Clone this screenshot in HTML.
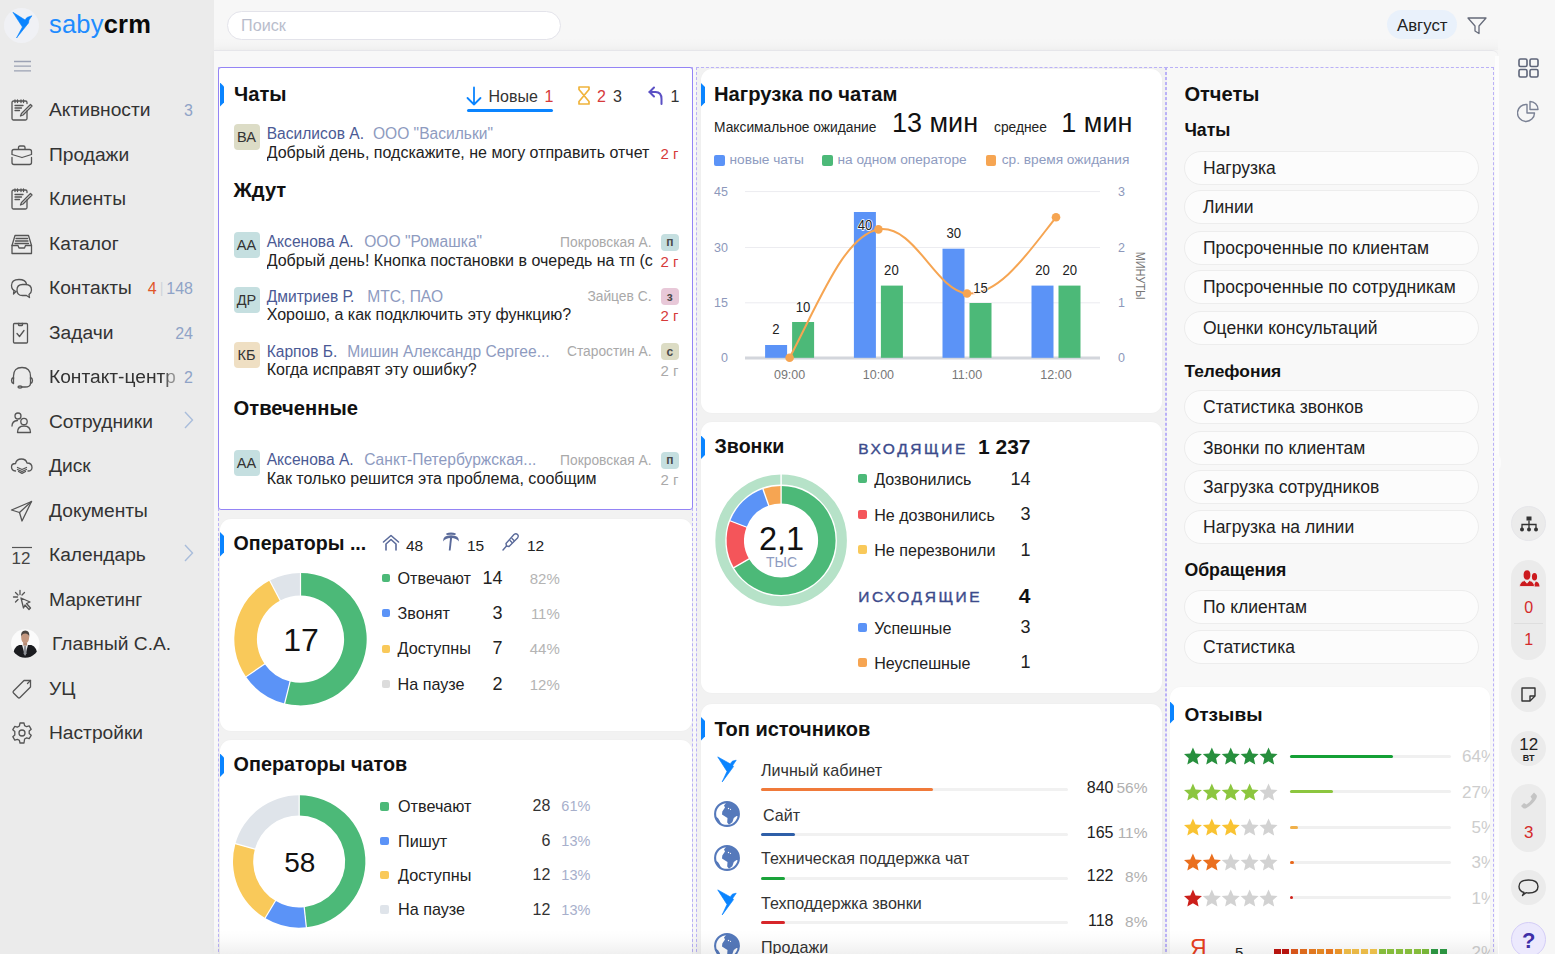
<!DOCTYPE html>
<html><head><meta charset="utf-8">
<style>
*{box-sizing:border-box;margin:0;padding:0}
html,body{width:1555px;height:954px;overflow:hidden}
body{font-family:"Liberation Sans",sans-serif;background:#f7f7f7;position:relative;color:#222}
.a{position:absolute;white-space:nowrap}
#side{position:absolute;left:0;top:0;width:214px;height:954px;background:#ebebeb}
.nav{position:absolute;left:0;width:214px;height:44px}
.nav .t{position:absolute;left:49px;top:12px;font-size:19.2px;color:#333;line-height:21px}
.nav svg{position:absolute;left:10px;top:11px}
.nav .c{position:absolute;right:21px;top:14px;font-size:16px;color:#8fa3c7;line-height:20px}
#panel{position:absolute;left:214px;top:50px;width:1284px;height:904px;background:#f8f8f8;border-top:1px solid #e6e6ea;border-top-right-radius:6px;box-shadow:2px 2px 8px rgba(0,0,0,.05)}
#rbar{position:absolute;left:1498px;top:50px;width:57px;height:904px;background:#f6f6f6}
.dash{position:absolute;border:1px dashed #bab1f7}
#tshade{position:absolute;left:214px;top:38px;width:1284px;height:12px;background:linear-gradient(rgba(0,0,0,0),rgba(0,0,0,.018))}
.card{position:absolute;background:#fff;border-radius:11px;box-shadow:0 0 2px rgba(0,0,0,.03)}
.mark{position:absolute;width:4px;height:24px;background:#0a84ff;clip-path:polygon(0 0,100% 4px,100% calc(100% - 4px),0 100%)}
.ttl{position:absolute;font-size:20.2px;font-weight:bold;color:#111;line-height:24px;white-space:nowrap}
.pill{position:absolute;left:1184px;width:295px;height:34px;border-radius:17px;background:#fcfcfc;border:1px solid #ededed;font-size:17.5px;color:#222;line-height:32px;padding-left:18px;white-space:nowrap}
.sub{position:absolute;left:1184px;font-size:17.5px;font-weight:bold;color:#111;line-height:20px}
.rb{position:absolute;left:1511px;width:35px;border-radius:18px;background:#ebebeb}
</style></head><body>
<div id="side">
<div class="a" style="left:4px;top:8px;width:35px;height:35px;border-radius:50%;background:#f0f1f5"></div>
<svg class="a" style="left:0;top:0" width="40" height="42" viewBox="0 0 40 42"><path d="M12.9 12.3 L25.2 20 Q26 18 27.5 17.3 L31.9 15.8 L29 20 L28.5 23 L16.5 38 L22.4 27 Z" fill="#0a84ff" stroke="#0a84ff" stroke-width="0.6" stroke-linejoin="round"/></svg>
<div class="a" style="left:49px;top:9px;font-size:25.5px;line-height:30px;letter-spacing:0.2px"><span style="color:#1e8cff">saby</span><span style="color:#0a0a0a;font-weight:bold">crm</span></div>
<svg class="a" style="left:14px;top:60px" width="17" height="12" viewBox="0 0 17 12"><path d="M0 1.5H17M0 6.2H17M0 10.8H17" stroke="#9ca2b4" stroke-width="1.3"/></svg>

<div class="nav" style="top:87px"><svg width="24" height="24" viewBox="0 0 24 24" fill="none" stroke="#555" stroke-width="1.3" stroke-linecap="round" stroke-linejoin="round"><path d="M17 13v7.5a1.5 1.5 0 0 1-1.5 1.5h-12A1.5 1.5 0 0 1 2 20.5V4.5A1.5 1.5 0 0 1 3.5 3h12A1.5 1.5 0 0 1 17 4.5v1"/><path d="M5 2v2.5M7.5 2v2.5M11 2v2.5M13.5 2v2.5M5 7.5h8M5 10h6.5M5 12.5h4.5"/><path d="M20.5 6.5l1.5 1.5-9 9-2.5 1 1-2.5z"/></svg><span class="t">Активности</span><span class="c">3</span></div>
<div class="nav" style="top:131.5px"><svg width="24" height="24" viewBox="0 0 24 24" fill="none" stroke="#555" stroke-width="1.3" stroke-linecap="round" stroke-linejoin="round"><path d="M8.5 6V4.5Q8.5 3 10 3h3.5Q15 3 15 4.5V6"/><path d="M2 8.5Q2 6.5 4 6.5h15.5Q21.5 6.5 21.5 8.5v3L12 14.5 2 11.5z"/><path d="M2 14.5v5q0 2 2 2h15.5q2 0 2-2v-5"/></svg><span class="t">Продажи</span></div>
<div class="nav" style="top:176px"><svg width="24" height="24" viewBox="0 0 24 24" fill="none" stroke="#555" stroke-width="1.3" stroke-linecap="round" stroke-linejoin="round"><path d="M17 13v7.5a1.5 1.5 0 0 1-1.5 1.5h-12A1.5 1.5 0 0 1 2 20.5V4.5A1.5 1.5 0 0 1 3.5 3h12A1.5 1.5 0 0 1 17 4.5v1"/><path d="M5 2v2.5M7.5 2v2.5M11 2v2.5M13.5 2v2.5M5 7.5h8M5 10h6.5M5 12.5h4.5"/><path d="M20.5 6.5l1.5 1.5-9 9-2.5 1 1-2.5z"/></svg><span class="t">Клиенты</span></div>
<div class="nav" style="top:220.5px"><svg width="24" height="24" viewBox="0 0 24 24" fill="none" stroke="#555" stroke-width="1.3" stroke-linecap="round" stroke-linejoin="round"><path d="M2 13.5l3-10h13.5l3 10"/><path d="M2 13.5v8h19.5v-8h-6l-1 2.5h-5.5l-1-2.5z"/><path d="M6 6.5h11.5M5.5 9h12.5M5 11.5h13.5"/></svg><span class="t">Каталог</span></div>
<div class="nav" style="top:265px"><svg width="24" height="24" viewBox="0 0 24 24" fill="none" stroke="#555" stroke-width="1.3" stroke-linecap="round" stroke-linejoin="round"><path d="M6 15.5Q1.5 14 1.5 9.5 1.5 3.5 9 3.5q6.5 0 7.5 4.5"/><path d="M6 15.5l-2.5 2.5 .5-3.5"/><path d="M12.5 8.5h3q6 0 6 5.5 0 3-2.5 4.5l.5 3-3-2h-4q-5.5 0-5.5-5.5 0-5.5 5.5-5.5z"/></svg><span class="t">Контакты</span><span class="c" style="right:21px"><span style="color:#e0552a">4</span><span style="color:#cfd3da;margin:0 3px;font-size:14px;position:relative;top:-1px">|</span>148</span></div>
<div class="nav" style="top:309.5px"><svg width="24" height="24" viewBox="0 0 24 24" fill="none" stroke="#555" stroke-width="1.3" stroke-linecap="round" stroke-linejoin="round"><path d="M9 2.5h-4.5Q3.5 2.5 3.5 3.5v17.5q0 1 1 1h12q1 0 1-1V3.5q0-1-1-1H12"/><path d="M8.5 2.5h4v1.5q0 .5-.5.5h-3q-.5 0-.5-.5z"/><path d="M7 12.5l2.5 3 4.5-6"/></svg><span class="t">Задачи</span><span class="c">24</span></div>
<div class="nav" style="top:354px"><svg width="24" height="24" viewBox="0 0 24 24" fill="none" stroke="#555" stroke-width="1.3" stroke-linecap="round" stroke-linejoin="round"><path d="M3.5 14V11Q3.5 2.5 12 2.5T20.5 11v3"/><path d="M3.5 12.5q-2 .5-2 3t2 3z M20.5 12.5q2 .5 2 3t-2 3z"/><path d="M20.5 18.5q0 3.5-5.5 3.5h-3.5"/><ellipse cx="10" cy="22" rx="2" ry="1"/></svg><span class="t" style="width:129px;overflow:hidden;-webkit-mask-image:linear-gradient(90deg,#000 88%,rgba(0,0,0,.25))">Контакт-центр</span><span class="c">2</span></div>
<div class="nav" style="top:398.5px"><svg width="24" height="24" viewBox="0 0 24 24" fill="none" stroke="#555" stroke-width="1.3" stroke-linecap="round" stroke-linejoin="round"><circle cx="8" cy="6" r="3"/><path d="M2 16q0-5 5.5-5.5"/><circle cx="14" cy="11.5" r="3.2"/><path d="M7.5 22.5q0-6.5 6.5-6.5t6.5 6.5z"/></svg><span class="t">Сотрудники</span><svg style="left:184px;top:12px" width="10" height="18" viewBox="0 0 10 18" fill="none" stroke="#a9bddb" stroke-width="1.4"><path d="M1 1l7.5 8L1 17"/></svg></div>
<div class="nav" style="top:443px"><svg width="24" height="24" viewBox="0 0 24 24" fill="none" stroke="#555" stroke-width="1.3" stroke-linecap="round" stroke-linejoin="round"><path d="M5.5 17Q1.5 16.5 1.5 13 1.5 9.5 5.5 9.5 6.5 5 11.5 5q4.5 0 5.5 4 5 0 5 4.5 0 3.5-4 3.5"/><path d="M7.5 13.5l4.5 2 4.5-2M7.5 15.5l4.5 2 4.5-2M8.5 17.5l3.5 1.8 3.5-1.8"/></svg><span class="t">Диск</span></div>
<div class="nav" style="top:487.5px"><svg width="24" height="24" viewBox="0 0 24 24" fill="none" stroke="#555" stroke-width="1.3" stroke-linecap="round" stroke-linejoin="round"><path d="M21.5 2.5L1.5 11l8 2.5 2.5 8.5z"/><path d="M9.5 13.5L21.5 2.5"/></svg><span class="t">Документы</span></div>
<div class="nav" style="top:532px"><svg width="24" height="24" viewBox="0 0 24 24"><path d="M2 4.5h20" stroke="#555" stroke-width="1.2"/><text x="1.5" y="21" font-family="Liberation Sans" font-size="17" fill="#444">12</text></svg><span class="t">Календарь</span><svg style="left:184px;top:12px" width="10" height="18" viewBox="0 0 10 18" fill="none" stroke="#a9bddb" stroke-width="1.4"><path d="M1 1l7.5 8L1 17"/></svg></div>
<div class="nav" style="top:576.5px"><svg width="24" height="24" viewBox="0 0 24 24" fill="none" stroke="#555" stroke-width="1.3" stroke-linecap="round" stroke-linejoin="round"><path d="M10 2.5v4M3.5 9h4M5.5 4.5l2.5 2.5M14.5 4.5L12 7M5.5 14l2.5-2.5"/><path d="M11 10l9 4-3.5 1.5 4 4.5-1.5 1.5-4-4.5L13.5 20z"/></svg><span class="t">Маркетинг</span></div>
<div class="nav" style="top:621px"><svg class="a" style="left:11px;top:7.5px" width="28.5" height="29" viewBox="0 0 28 28"><defs><clipPath id="cav"><circle cx="14" cy="14" r="14"/></clipPath></defs><circle cx="14" cy="14" r="14" fill="#fbfbfb"/><g clip-path="url(#cav)"><path d="M1.5 30 Q1.5 17.5 8 15.5 L20 15.5 Q26.5 17.5 26.5 30 Z" fill="#1b1c20"/><path d="M10.8 15.3 L13.8 26 L16.8 15.3 Z" fill="#e6e6e6"/><path d="M13 16 L14.6 16 L15.3 23.5 L13.8 26 L12.4 23.5 Z" fill="#8d9096"/><rect x="12" y="11.5" width="3.8" height="4.5" fill="#b48a74"/><ellipse cx="13.9" cy="8.2" rx="3.9" ry="5.6" fill="#c49880"/><path d="M9.8 7.5 Q9.5 1.2 14 1.2 Q18.5 1.2 18 7.5 Q17.3 4.3 14 4.2 Q10.6 4.3 9.8 7.5Z" fill="#4b4540"/></g></svg><span class="t" style="left:52px">Главный С.А.</span></div>
<div class="nav" style="top:665.5px"><svg width="24" height="24" viewBox="0 0 24 24" fill="none" stroke="#555" stroke-width="1.3" stroke-linecap="round" stroke-linejoin="round"><path d="M14 3.5h6.5V10L10 20.5q-1 1-2 0L3.5 16q-1-1 0-2z"/><path d="M17.5 6.5l3-3"/></svg><span class="t">УЦ</span></div>
<div class="nav" style="top:710px"><svg width="24" height="24" viewBox="0 0 24 24" fill="none" stroke="#555" stroke-width="1.3" stroke-linecap="round" stroke-linejoin="round"><circle cx="12" cy="12" r="3"/><path d="M10 2h4l.6 2.6 2 1.1 2.6-.8 2 3.4-2 1.8v2.4l2 1.8-2 3.4-2.6-.8-2 1.1L14 22h-4l-.6-2.6-2-1.1-2.6.8-2-3.4 2-1.8V10.5l-2-1.8 2-3.4 2.6.8 2-1.1z"/></svg><span class="t">Настройки</span></div>
</div>
<div id="tshade"></div><div id="panel"></div><div id="rbar"></div>
<div class="a" style="left:227px;top:11px;width:334px;height:29px;border-radius:15px;background:#fff;border:1px solid #e3e3ea"></div>
<div class="a" style="left:241px;top:16px;font-size:16.2px;color:#b9bdcc;line-height:19px">Поиск</div>
<div class="a" style="left:1387px;top:10px;width:70px;height:29px;border-radius:15px;background:#e9f1fb"></div>
<div class="a" style="left:1397px;top:16px;font-size:16.8px;color:#222;line-height:19px">Август</div>
<svg class="a" style="left:1467px;top:17px" width="20" height="18" viewBox="0 0 20 18" fill="none" stroke="#666b7a" stroke-width="1.3" stroke-linejoin="round"><path d="M1 1h18l-7 8v7.5l-4-2.5V9z"/></svg>

<div class="a" style="left:1495px;top:56px;width:3.5px;height:898px;background:#fdfdfd"></div><div class="a" style="left:1493px;top:453px;width:8px;height:19px;border-radius:0 10px 10px 0;background:#fbfbfb"></div>
<div class="dash" style="left:218px;top:67px;width:475px;height:900px;background:#f2f2f2"></div>
<div class="dash" style="left:696px;top:67px;width:471px;height:900px;background:#f2f2f2"></div>
<div class="dash" style="left:1165px;top:67px;width:329px;height:900px"></div>
<div class="a" style="left:218px;top:67px;width:475px;height:443px;background:#fff;border:1.8px solid #9484f5;border-radius:3px"></div>
<div class="mark" style="left:220px;top:82.5px;height:24px"></div>
<div class="a" style="left:234.00px;top:84.03px;font-size:20.2px;line-height:20.2px;color:#111;font-weight:bold;">Чаты</div>
<svg class="a" style="left:466px;top:86px" width="16" height="20" viewBox="0 0 16 20" fill="none" stroke="#0a84ff" stroke-width="1.8" stroke-linecap="round" stroke-linejoin="round"><path d="M8 1.5v17M1.5 12l6.5 6.5 6.5-6.5"/></svg>
<div class="a" style="left:488.50px;top:89.40px;font-size:16px;line-height:16px;color:#333;">Новые</div>
<div class="a" style="left:544.50px;top:89.40px;font-size:16px;line-height:16px;color:#d63a3a;">1</div>
<div class="a" style="left:466.5px;top:108.5px;width:86px;height:3px;background:#0a84ff;border-radius:2px"></div>
<svg class="a" style="left:578px;top:86px" width="12" height="19" viewBox="0 0 12 19" fill="none" stroke="#f0b43c" stroke-width="1.7" stroke-linejoin="round"><path d="M1 1h10v2.5L6 9.5 1 3.5zM1 18h10v-2.5L6 9.5 1 15.5z"/></svg>
<div class="a" style="left:597.00px;top:89.40px;font-size:16px;line-height:16px;color:#d63a3a;">2</div>
<div class="a" style="left:613.00px;top:89.40px;font-size:16px;line-height:16px;color:#333;">3</div>
<svg class="a" style="left:648px;top:86px" width="16" height="19" viewBox="0 0 16 19" fill="none" stroke="#5b50c4" stroke-width="2" stroke-linecap="round" stroke-linejoin="round"><path d="M6 1.5L1.5 6 6 10.5"/><path d="M1.5 6h6q6 0 6 7v5"/></svg>
<div class="a" style="left:670.50px;top:89.40px;font-size:16px;line-height:16px;color:#333;">1</div>
<div class="a" style="left:233.5px;top:124px;width:26px;height:26px;background:#dcdcc6;border-radius:4px"></div>
<div class="a" style="left:246.50px;top:130.18px;font-size:14.5px;line-height:14.5px;color:#333;transform:translateX(-50%);">ВА</div>
<div class="a" style="left:266.70px;top:126.04px;font-size:15.6px;line-height:15.6px;color:#4b5a95;">Василисов А.</div>
<div class="a" style="left:372.90px;top:126.04px;font-size:15.6px;line-height:15.6px;color:#8e9bbf;">ООО "Васильки"</div>
<div class="a" style="left:266.7px;top:144.70px;width:387px;overflow:hidden;font-size:16px;line-height:16px;color:#222">Добрый день, подскажите, не могу отправить отчет по НДС</div>
<div class="a" style="left:678.60px;top:145.55px;font-size:15px;line-height:15px;color:#d63a3a;transform:translateX(-100%);">2 г</div>
<div class="a" style="left:233.60px;top:180.33px;font-size:20.2px;line-height:20.2px;color:#111;font-weight:bold;">Ждут</div>
<div class="a" style="left:233.5px;top:232px;width:26px;height:26px;background:#c5dfe0;border-radius:4px"></div>
<div class="a" style="left:246.50px;top:238.18px;font-size:14.5px;line-height:14.5px;color:#333;transform:translateX(-50%);">АА</div>
<div class="a" style="left:266.70px;top:234.04px;font-size:15.6px;line-height:15.6px;color:#4b5a95;">Аксенова А.</div>
<div class="a" style="left:364.20px;top:234.04px;font-size:15.6px;line-height:15.6px;color:#8e9bbf;">ООО "Ромашка"</div>
<div class="a" style="left:651.50px;top:235.57px;font-size:13.8px;line-height:13.8px;color:#a9a9a9;transform:translateX(-100%);">Покровская А.</div>
<div class="a" style="left:660.8px;top:233.8px;width:18px;height:16.8px;background:#c5dfe0;border-radius:4px"></div>
<div class="a" style="left:669.80px;top:236.00px;font-size:12px;line-height:12px;color:#4a4a4a;font-weight:bold;transform:translateX(-50%);">п</div>
<div class="a" style="left:266.7px;top:252.70px;width:387px;overflow:hidden;font-size:16px;line-height:16px;color:#222">Добрый день! Кнопка постановки в очередь на тп (с</div>
<div class="a" style="left:678.60px;top:253.55px;font-size:15px;line-height:15px;color:#d63a3a;transform:translateX(-100%);">2 г</div>
<div class="a" style="left:233.5px;top:286.5px;width:26px;height:26px;background:#c5dfe0;border-radius:4px"></div>
<div class="a" style="left:246.50px;top:292.68px;font-size:14.5px;line-height:14.5px;color:#333;transform:translateX(-50%);">ДР</div>
<div class="a" style="left:266.70px;top:288.54px;font-size:15.6px;line-height:15.6px;color:#4b5a95;">Дмитриев Р.</div>
<div class="a" style="left:367.20px;top:288.54px;font-size:15.6px;line-height:15.6px;color:#8e9bbf;">МТС, ПАО</div>
<div class="a" style="left:651.50px;top:290.07px;font-size:13.8px;line-height:13.8px;color:#a9a9a9;transform:translateX(-100%);">Зайцев С.</div>
<div class="a" style="left:660.8px;top:288.3px;width:18px;height:16.8px;background:#e8c8d8;border-radius:4px"></div>
<div class="a" style="left:669.80px;top:290.50px;font-size:12px;line-height:12px;color:#4a4a4a;font-weight:bold;transform:translateX(-50%);">з</div>
<div class="a" style="left:266.7px;top:307.20px;width:387px;overflow:hidden;font-size:16px;line-height:16px;color:#222">Хорошо, а как подключить эту функцию?</div>
<div class="a" style="left:678.60px;top:308.05px;font-size:15px;line-height:15px;color:#d63a3a;transform:translateX(-100%);">2 г</div>
<div class="a" style="left:233.5px;top:341.5px;width:26px;height:26px;background:#efdfc3;border-radius:4px"></div>
<div class="a" style="left:246.50px;top:347.68px;font-size:14.5px;line-height:14.5px;color:#333;transform:translateX(-50%);">КБ</div>
<div class="a" style="left:266.70px;top:343.54px;font-size:15.6px;line-height:15.6px;color:#4b5a95;">Карпов Б.</div>
<div class="a" style="left:347.20px;top:343.54px;font-size:15.6px;line-height:15.6px;color:#8e9bbf;">Мишин Александр Сергее...</div>
<div class="a" style="left:651.50px;top:345.07px;font-size:13.8px;line-height:13.8px;color:#a9a9a9;transform:translateX(-100%);">Старостин А.</div>
<div class="a" style="left:660.8px;top:343.3px;width:18px;height:16.8px;background:#dcdcc4;border-radius:4px"></div>
<div class="a" style="left:669.80px;top:345.50px;font-size:12px;line-height:12px;color:#4a4a4a;font-weight:bold;transform:translateX(-50%);">с</div>
<div class="a" style="left:266.7px;top:362.20px;width:387px;overflow:hidden;font-size:16px;line-height:16px;color:#222">Когда исправят эту ошибку?</div>
<div class="a" style="left:678.60px;top:363.05px;font-size:15px;line-height:15px;color:#aaa;transform:translateX(-100%);">2 г</div>
<div class="a" style="left:233.60px;top:397.53px;font-size:20.2px;line-height:20.2px;color:#111;font-weight:bold;">Отвеченные</div>
<div class="a" style="left:233.5px;top:450px;width:26px;height:26px;background:#c5dfe0;border-radius:4px"></div>
<div class="a" style="left:246.50px;top:456.18px;font-size:14.5px;line-height:14.5px;color:#333;transform:translateX(-50%);">АА</div>
<div class="a" style="left:266.70px;top:452.04px;font-size:15.6px;line-height:15.6px;color:#4b5a95;">Аксенова А.</div>
<div class="a" style="left:364.20px;top:452.04px;font-size:15.6px;line-height:15.6px;color:#8e9bbf;">Санкт-Петербуржская...</div>
<div class="a" style="left:651.50px;top:453.57px;font-size:13.8px;line-height:13.8px;color:#a9a9a9;transform:translateX(-100%);">Покровская А.</div>
<div class="a" style="left:660.8px;top:451.8px;width:18px;height:16.8px;background:#c5dfe0;border-radius:4px"></div>
<div class="a" style="left:669.80px;top:454.00px;font-size:12px;line-height:12px;color:#4a4a4a;font-weight:bold;transform:translateX(-50%);">п</div>
<div class="a" style="left:266.7px;top:470.70px;width:387px;overflow:hidden;font-size:16px;line-height:16px;color:#222">Как только решится эта проблема, сообщим</div>
<div class="a" style="left:678.60px;top:471.55px;font-size:15px;line-height:15px;color:#aaa;transform:translateX(-100%);">2 г</div>
<div class="card" style="left:220px;top:518.5px;width:472px;height:212px"></div>
<div class="mark" style="left:220px;top:532px;height:24.5px"></div>
<div class="a" style="left:233.60px;top:534.34px;font-size:19.6px;line-height:19.6px;color:#111;font-weight:bold;">Операторы ...</div>
<svg class="a" style="left:382px;top:534px" width="18" height="17" viewBox="0 0 18 17" fill="none" stroke="#5a6a9a" stroke-width="1.6" stroke-linecap="round" stroke-linejoin="round"><path d="M1.5 8L9 1.5 16.5 8"/><path d="M4 16V10L9 5.5 14 10v6"/></svg>
<div class="a" style="left:406.00px;top:537.83px;font-size:15.5px;line-height:15.5px;color:#222;">48</div>
<svg class="a" style="left:442px;top:532px" width="18" height="20" viewBox="0 0 18 20" fill="#5a6a9a"><path d="M1.2 9.5 Q0.5 3.2 9 3.2 Q17.5 3.2 16.8 9.5 Q14.8 6 9 6 Q3.2 6 1.2 9.5 Z"/><path d="M4.5 2.2 Q9 0.2 13.5 2.2 Q9 1.5 4.5 2.2Z" stroke="#5a6a9a" stroke-width="1.6"/><path d="M8.2 4.5 L10.2 4.5 L8.6 18.5 L6.8 18.5 Z"/></svg>
<div class="a" style="left:467.00px;top:537.83px;font-size:15.5px;line-height:15.5px;color:#222;">15</div>
<svg class="a" style="left:501px;top:532px" width="20" height="20" viewBox="0 0 20 20" fill="none" stroke="#5a6a9a" stroke-width="1.4" stroke-linecap="round" stroke-linejoin="round"><path d="M13 2.5q2-1.5 3.5 0t0 3.5L8 14.5l-2.5-.5L5 11.5z"/><path d="M5.5 14L2 18M9 8.5l2 2M11 6.5l2 2"/></svg>
<div class="a" style="left:527.00px;top:537.83px;font-size:15.5px;line-height:15.5px;color:#222;">12</div>
<svg class="a" style="left:230px;top:569px" width="142" height="142" viewBox="230 569 142 142"><path d="M300.50 573.00A66.2 66.2 0 1 1 284.66 703.48L290.07 681.53A43.6 43.6 0 1 0 300.50 595.60Z" fill="#4cb978"/><path d="M284.66 703.48A66.2 66.2 0 0 1 246.02 676.81L264.62 663.97A43.6 43.6 0 0 0 290.07 681.53Z" fill="#5b93f7"/><path d="M246.02 676.81A66.2 66.2 0 0 1 269.74 580.58L280.24 600.59A43.6 43.6 0 0 0 264.62 663.97Z" fill="#f9c95a"/><path d="M269.74 580.58A66.2 66.2 0 0 1 300.50 573.00L300.50 595.60A43.6 43.6 0 0 0 280.24 600.59Z" fill="#dfe4ea"/><line x1="300.50" y1="596.60" x2="300.50" y2="572.00" stroke="#fff" stroke-width="1.2"/><line x1="290.31" y1="680.56" x2="284.42" y2="704.45" stroke="#fff" stroke-width="1.2"/><line x1="265.44" y1="663.40" x2="245.20" y2="677.37" stroke="#fff" stroke-width="1.2"/><line x1="280.70" y1="601.48" x2="269.27" y2="579.70" stroke="#fff" stroke-width="1.2"/></svg>
<div class="a" style="left:301.00px;top:623.80px;font-size:32px;line-height:32px;color:#111;transform:translateX(-50%);">17</div>
<div class="a" style="left:381.8px;top:573.8px;width:8px;height:8px;background:#4cb978;border-radius:2px"></div>
<div class="a" style="left:397.50px;top:569.53px;font-size:16.2px;line-height:16.2px;color:#222;">Отвечают</div>
<div class="a" style="left:502.50px;top:568.50px;font-size:18px;line-height:18px;color:#222;transform:translateX(-100%);">14</div>
<div class="a" style="left:559.80px;top:570.55px;font-size:15px;line-height:15px;color:#b4b4b4;transform:translateX(-100%);">82%</div>
<div class="a" style="left:381.8px;top:609px;width:8px;height:8px;background:#5b93f7;border-radius:2px"></div>
<div class="a" style="left:397.50px;top:604.73px;font-size:16.2px;line-height:16.2px;color:#222;">Звонят</div>
<div class="a" style="left:502.50px;top:603.70px;font-size:18px;line-height:18px;color:#222;transform:translateX(-100%);">3</div>
<div class="a" style="left:559.80px;top:605.75px;font-size:15px;line-height:15px;color:#b4b4b4;transform:translateX(-100%);">11%</div>
<div class="a" style="left:381.8px;top:644.7px;width:8px;height:8px;background:#f9c95a;border-radius:2px"></div>
<div class="a" style="left:397.50px;top:640.43px;font-size:16.2px;line-height:16.2px;color:#222;">Доступны</div>
<div class="a" style="left:502.50px;top:639.40px;font-size:18px;line-height:18px;color:#222;transform:translateX(-100%);">7</div>
<div class="a" style="left:559.80px;top:641.45px;font-size:15px;line-height:15px;color:#b4b4b4;transform:translateX(-100%);">44%</div>
<div class="a" style="left:381.8px;top:680.3px;width:8px;height:8px;background:#dcdcdc;border-radius:2px"></div>
<div class="a" style="left:397.50px;top:676.03px;font-size:16.2px;line-height:16.2px;color:#222;">На паузе</div>
<div class="a" style="left:502.50px;top:675.00px;font-size:18px;line-height:18px;color:#222;transform:translateX(-100%);">2</div>
<div class="a" style="left:559.80px;top:677.05px;font-size:15px;line-height:15px;color:#b4b4b4;transform:translateX(-100%);">12%</div>
<div class="card" style="left:220px;top:739.5px;width:472px;height:240px"></div>
<div class="mark" style="left:220px;top:753.5px;height:23.5px"></div>
<div class="a" style="left:233.60px;top:755.17px;font-size:19.8px;line-height:19.8px;color:#111;font-weight:bold;">Операторы чатов</div>
<svg class="a" style="left:229px;top:791px" width="142" height="142" viewBox="229 791 142 142"><path d="M299.20 795.20A66.2 66.2 0 0 1 306.36 927.21L304.17 907.13A46 46 0 0 0 299.20 815.40Z" fill="#4cb978"/><path d="M306.36 927.21A66.2 66.2 0 0 1 265.07 918.12L275.48 900.82A46 46 0 0 0 304.17 907.13Z" fill="#5b93f7"/><path d="M265.07 918.12A66.2 66.2 0 0 1 235.41 843.69L254.88 849.09A46 46 0 0 0 275.48 900.82Z" fill="#f9c95a"/><path d="M235.41 843.69A66.2 66.2 0 0 1 299.20 795.20L299.20 815.40A46 46 0 0 0 254.88 849.09Z" fill="#dfe4ea"/><line x1="299.20" y1="816.40" x2="299.20" y2="794.20" stroke="#fff" stroke-width="1.2"/><line x1="304.07" y1="906.14" x2="306.47" y2="928.21" stroke="#fff" stroke-width="1.2"/><line x1="276.00" y1="899.96" x2="264.55" y2="918.98" stroke="#fff" stroke-width="1.2"/><line x1="255.84" y1="849.36" x2="234.45" y2="843.42" stroke="#fff" stroke-width="1.2"/></svg>
<div class="a" style="left:299.80px;top:848.50px;font-size:28px;line-height:28px;color:#111;transform:translateX(-50%);">58</div>
<div class="a" style="left:380.3px;top:802.0999999999999px;width:8.5px;height:8.5px;background:#4cb978;border-radius:2px"></div>
<div class="a" style="left:398.00px;top:798.03px;font-size:16.2px;line-height:16.2px;color:#222;">Отвечают</div>
<div class="a" style="left:550.40px;top:798.20px;font-size:16px;line-height:16px;color:#333;transform:translateX(-100%);">28</div>
<div class="a" style="left:590.40px;top:799.47px;font-size:14.5px;line-height:14.5px;color:#a7afcb;transform:translateX(-100%);">61%</div>
<div class="a" style="left:380.3px;top:836.8px;width:8.5px;height:8.5px;background:#5b93f7;border-radius:2px"></div>
<div class="a" style="left:398.00px;top:832.73px;font-size:16.2px;line-height:16.2px;color:#222;">Пишут</div>
<div class="a" style="left:550.40px;top:832.90px;font-size:16px;line-height:16px;color:#333;transform:translateX(-100%);">6</div>
<div class="a" style="left:590.40px;top:834.17px;font-size:14.5px;line-height:14.5px;color:#a7afcb;transform:translateX(-100%);">13%</div>
<div class="a" style="left:380.3px;top:870.8px;width:8.5px;height:8.5px;background:#f9c95a;border-radius:2px"></div>
<div class="a" style="left:398.00px;top:866.73px;font-size:16.2px;line-height:16.2px;color:#222;">Доступны</div>
<div class="a" style="left:550.40px;top:866.90px;font-size:16px;line-height:16px;color:#333;transform:translateX(-100%);">12</div>
<div class="a" style="left:590.40px;top:868.17px;font-size:14.5px;line-height:14.5px;color:#a7afcb;transform:translateX(-100%);">13%</div>
<div class="a" style="left:380.3px;top:905.4px;width:8.5px;height:8.5px;background:#dfe4ea;border-radius:2px"></div>
<div class="a" style="left:398.00px;top:901.33px;font-size:16.2px;line-height:16.2px;color:#222;">На паузе</div>
<div class="a" style="left:550.40px;top:901.50px;font-size:16px;line-height:16px;color:#333;transform:translateX(-100%);">12</div>
<div class="a" style="left:590.40px;top:902.77px;font-size:14.5px;line-height:14.5px;color:#a7afcb;transform:translateX(-100%);">13%</div>
<div class="card" style="left:701px;top:69px;width:461px;height:344px"></div>
<div class="mark" style="left:701px;top:83px;height:23.5px"></div>
<div class="a" style="left:714.00px;top:83.83px;font-size:20.2px;line-height:20.2px;color:#111;font-weight:bold;">Нагрузка по чатам</div>
<div class="a" style="left:714.00px;top:120.77px;font-size:13.8px;line-height:13.8px;color:#222;">Максимальное ожидание</div>
<div class="a" style="left:892.00px;top:110.15px;font-size:27px;line-height:27px;color:#111;">13 мин</div>
<div class="a" style="left:994.00px;top:120.77px;font-size:13.8px;line-height:13.8px;color:#222;">среднее</div>
<div class="a" style="left:1061.30px;top:110.15px;font-size:27px;line-height:27px;color:#111;">1 мин</div>
<div class="a" style="left:714px;top:155px;width:10.5px;height:10.5px;background:#5b93f7;border-radius:2px"></div>
<div class="a" style="left:729.50px;top:153.35px;font-size:13.7px;line-height:13.7px;color:#8e9bc0;">новые чаты</div>
<div class="a" style="left:822px;top:155px;width:10.5px;height:10.5px;background:#4cb978;border-radius:2px"></div>
<div class="a" style="left:837.50px;top:153.35px;font-size:13.7px;line-height:13.7px;color:#8e9bc0;">на одном операторе</div>
<div class="a" style="left:985.7px;top:155px;width:10.5px;height:10.5px;background:#f6a552;border-radius:2px"></div>
<div class="a" style="left:1001.70px;top:153.35px;font-size:13.7px;line-height:13.7px;color:#8e9bc0;">ср. время ожидания</div>
<svg class="a" style="left:701px;top:175px" width="461" height="236" viewBox="701 175 461 236"><line x1="745" y1="191.6" x2="1100" y2="191.6" stroke="#ececf0" stroke-width="1"/><line x1="745" y1="247.5" x2="1100" y2="247.5" stroke="#ececf0" stroke-width="1"/><line x1="745" y1="302.8" x2="1100" y2="302.8" stroke="#ececf0" stroke-width="1"/><rect x="745" y="356.5" width="355" height="3" fill="#d3d6dc"/><text x="728" y="196.1" font-size="12.5" fill="#8d98bb" text-anchor="end" font-family="Liberation Sans">45</text><text x="1118" y="196.1" font-size="12.5" fill="#8d98bb" font-family="Liberation Sans">3</text><text x="728" y="252.0" font-size="12.5" fill="#8d98bb" text-anchor="end" font-family="Liberation Sans">30</text><text x="1118" y="252.0" font-size="12.5" fill="#8d98bb" font-family="Liberation Sans">2</text><text x="728" y="307.3" font-size="12.5" fill="#8d98bb" text-anchor="end" font-family="Liberation Sans">15</text><text x="1118" y="307.3" font-size="12.5" fill="#8d98bb" font-family="Liberation Sans">1</text><text x="728" y="362.3" font-size="12.5" fill="#8d98bb" text-anchor="end" font-family="Liberation Sans">0</text><text x="1118" y="362.3" font-size="12.5" fill="#8d98bb" font-family="Liberation Sans">0</text><rect x="765.1" y="345.0" width="22" height="12.8" fill="#5b93f7"/><rect x="792.1" y="322.0" width="22" height="35.8" fill="#4cb978"/><text x="789.6" y="379.0" font-size="12.5" fill="#777" text-anchor="middle" font-family="Liberation Sans">09:00</text><rect x="853.9" y="212.0" width="22" height="145.8" fill="#5b93f7"/><rect x="880.9" y="285.6" width="22" height="72.2" fill="#4cb978"/><text x="878.4" y="379.0" font-size="12.5" fill="#777" text-anchor="middle" font-family="Liberation Sans">10:00</text><rect x="942.5" y="248.7" width="22" height="109.1" fill="#5b93f7"/><rect x="969.5" y="303.0" width="22" height="54.8" fill="#4cb978"/><text x="967" y="379.0" font-size="12.5" fill="#777" text-anchor="middle" font-family="Liberation Sans">11:00</text><rect x="1031.5" y="285.6" width="22" height="72.2" fill="#5b93f7"/><rect x="1058.5" y="285.6" width="22" height="72.2" fill="#4cb978"/><text x="1056" y="379.0" font-size="12.5" fill="#777" text-anchor="middle" font-family="Liberation Sans">12:00</text><path d="M789.6 357.8 C820 300, 845 235, 878.4 229.4 C915 224, 935 290, 967 293.5 C1000 296, 1030 250, 1056 217.3" fill="none" stroke="#f6a552" stroke-width="2"/><circle cx="789.6" cy="357.8" r="4.3" fill="#f6a552"/><circle cx="878.4" cy="229.4" r="4.3" fill="#f6a552"/><circle cx="967" cy="293.5" r="4.3" fill="#f6a552"/><circle cx="1056" cy="217.3" r="4.3" fill="#f6a552"/><text x="776" y="334.2" font-size="15" fill="#222" text-anchor="middle" font-family="Liberation Sans" stroke="#fff" stroke-width="1.6" paint-order="stroke" textLength="7.3" lengthAdjust="spacingAndGlyphs">2</text><text x="803" y="311.7" font-size="15" fill="#222" text-anchor="middle" font-family="Liberation Sans" stroke="#fff" stroke-width="1.6" paint-order="stroke" textLength="14.6" lengthAdjust="spacingAndGlyphs">10</text><text x="865" y="229.7" font-size="15" fill="#222" text-anchor="middle" font-family="Liberation Sans" stroke="#fff" stroke-width="1.6" paint-order="stroke" textLength="14.6" lengthAdjust="spacingAndGlyphs">40</text><text x="891.4" y="275.2" font-size="15" fill="#222" text-anchor="middle" font-family="Liberation Sans" stroke="#fff" stroke-width="1.6" paint-order="stroke" textLength="14.6" lengthAdjust="spacingAndGlyphs">20</text><text x="953.7" y="238.2" font-size="15" fill="#222" text-anchor="middle" font-family="Liberation Sans" stroke="#fff" stroke-width="1.6" paint-order="stroke" textLength="14.6" lengthAdjust="spacingAndGlyphs">30</text><text x="980.6" y="293.2" font-size="15" fill="#222" text-anchor="middle" font-family="Liberation Sans" stroke="#fff" stroke-width="1.6" paint-order="stroke" textLength="14.6" lengthAdjust="spacingAndGlyphs">15</text><text x="1042.5" y="275.2" font-size="15" fill="#222" text-anchor="middle" font-family="Liberation Sans" stroke="#fff" stroke-width="1.6" paint-order="stroke" textLength="14.6" lengthAdjust="spacingAndGlyphs">20</text><text x="1069.7" y="275.2" font-size="15" fill="#222" text-anchor="middle" font-family="Liberation Sans" stroke="#fff" stroke-width="1.6" paint-order="stroke" textLength="14.6" lengthAdjust="spacingAndGlyphs">20</text><text x="0" y="0" font-size="12.5" fill="#777" font-family="Liberation Sans" textLength="48" lengthAdjust="spacingAndGlyphs" transform="translate(1136 251.7) rotate(90)">МИНУТЫ</text></svg>
<div class="card" style="left:701px;top:422px;width:461px;height:271px"></div>
<div class="mark" style="left:701px;top:435.5px;height:23.5px"></div>
<div class="a" style="left:714.60px;top:437.04px;font-size:19.6px;line-height:19.6px;color:#111;font-weight:bold;">Звонки</div>
<svg class="a" style="left:711px;top:470px" width="141" height="141" viewBox="711 470 141 141"><circle cx="781.1" cy="540.4" r="60.8" fill="none" stroke="#b6e2c8" stroke-width="10"/><line x1="781.1" y1="474" x2="781.1" y2="486" stroke="#fff" stroke-width="1.5"/><path d="M781.10 485.90A54.5 54.5 0 1 1 733.90 567.65L749.06 558.90A37 37 0 1 0 781.10 503.40Z" fill="#4cb978"/><path d="M733.90 567.65A54.5 54.5 0 0 1 730.22 520.87L746.56 527.14A37 37 0 0 0 749.06 558.90Z" fill="#f4555a"/><path d="M730.22 520.87A54.5 54.5 0 0 1 762.91 489.03L768.75 505.52A37 37 0 0 0 746.56 527.14Z" fill="#5b93f7"/><path d="M762.91 489.03A54.5 54.5 0 0 1 781.10 485.90L781.10 503.40A37 37 0 0 0 768.75 505.52Z" fill="#f6a552"/><line x1="781.10" y1="504.40" x2="781.10" y2="484.90" stroke="#fff" stroke-width="1.3"/><line x1="749.92" y1="558.40" x2="733.04" y2="568.15" stroke="#fff" stroke-width="1.3"/><line x1="747.49" y1="527.50" x2="729.29" y2="520.51" stroke="#fff" stroke-width="1.3"/><line x1="769.08" y1="506.46" x2="762.57" y2="488.08" stroke="#fff" stroke-width="1.3"/></svg>
<div class="a" style="left:781.50px;top:522.67px;font-size:32.5px;line-height:32.5px;color:#111;transform:translateX(-50%);">2,1</div>
<div class="a" style="left:781.50px;top:554.60px;font-size:14px;line-height:14px;color:#8e9bc0;transform:translateX(-50%);">ТЫС</div>
<div class="a" style="left:858.20px;top:441.12px;font-size:15.5px;line-height:15.5px;color:#3c4b8c;letter-spacing:2.6px;-webkit-text-stroke:0.4px #3c4b8c">ВХОДЯЩИЕ</div>
<div class="a" style="left:1030.50px;top:436.45px;font-size:21px;line-height:21px;color:#111;font-weight:bold;transform:translateX(-100%);">1 237</div>
<div class="a" style="left:858.2px;top:474.0px;width:9px;height:9px;background:#4cb978;border-radius:2px"></div>
<div class="a" style="left:874.20px;top:470.81px;font-size:16.1px;line-height:16.1px;color:#222;">Дозвонились</div>
<div class="a" style="left:1030.50px;top:469.70px;font-size:18px;line-height:18px;color:#222;transform:translateX(-100%);">14</div>
<div class="a" style="left:858.2px;top:509.70000000000005px;width:9px;height:9px;background:#f4555a;border-radius:2px"></div>
<div class="a" style="left:874.20px;top:506.52px;font-size:16.1px;line-height:16.1px;color:#222;">Не дозвонились</div>
<div class="a" style="left:1030.50px;top:505.40px;font-size:18px;line-height:18px;color:#222;transform:translateX(-100%);">3</div>
<div class="a" style="left:858.2px;top:545.0px;width:9px;height:9px;background:#f9c95a;border-radius:2px"></div>
<div class="a" style="left:874.20px;top:541.82px;font-size:16.1px;line-height:16.1px;color:#222;">Не перезвонили</div>
<div class="a" style="left:1030.50px;top:540.70px;font-size:18px;line-height:18px;color:#222;transform:translateX(-100%);">1</div>
<div class="a" style="left:858.2px;top:622.7px;width:9px;height:9px;background:#5b93f7;border-radius:2px"></div>
<div class="a" style="left:874.20px;top:619.52px;font-size:16.1px;line-height:16.1px;color:#222;">Успешные</div>
<div class="a" style="left:1030.50px;top:618.40px;font-size:18px;line-height:18px;color:#222;transform:translateX(-100%);">3</div>
<div class="a" style="left:858.2px;top:657.7px;width:9px;height:9px;background:#f6a552;border-radius:2px"></div>
<div class="a" style="left:874.20px;top:654.52px;font-size:16.1px;line-height:16.1px;color:#222;">Неуспешные</div>
<div class="a" style="left:1030.50px;top:653.40px;font-size:18px;line-height:18px;color:#222;transform:translateX(-100%);">1</div>
<div class="a" style="left:858.20px;top:589.23px;font-size:15.5px;line-height:15.5px;color:#3c4b8c;letter-spacing:2.6px;-webkit-text-stroke:0.4px #3c4b8c">ИСХОДЯЩИЕ</div>
<div class="a" style="left:1030.50px;top:584.55px;font-size:21px;line-height:21px;color:#111;font-weight:bold;transform:translateX(-100%);">4</div>
<div class="card" style="left:701px;top:703.5px;width:461px;height:260px"></div>
<div class="mark" style="left:701px;top:717px;height:23.5px"></div>
<div class="a" style="left:714.60px;top:719.30px;font-size:20px;line-height:20px;color:#111;font-weight:bold;">Топ источников</div>
<svg class="a" style="left:710px;top:750.0px" width="35" height="40" viewBox="0 0 35 40"><path d="M7.75 6.9 L20.5 14 L21.4 12.2 Q22 11.3 22.8 11.1 L26.2 10.2 L23.3 14.5 L22.8 15.7 L23.5 16.6 L12.2 31.9 L17 21.4 Z" fill="#0a84ff" stroke="#0a84ff" stroke-width="0.7" stroke-linejoin="round"/></svg>
<div class="a" style="left:761.00px;top:761.82px;font-size:16.1px;line-height:16.1px;color:#333;">Личный кабинет</div>
<div class="a" style="left:761px;top:788px;width:307px;height:3px;background:#f1f1f1;border-radius:2px"></div>
<div class="a" style="left:761px;top:788px;width:172px;height:3px;background:#f07a3a;border-radius:2px"></div>
<div class="a" style="left:1113.50px;top:779.70px;font-size:16px;line-height:16px;color:#222;transform:translateX(-100%);">840</div>
<div class="a" style="left:1147.50px;top:780.12px;font-size:15.5px;line-height:15.5px;color:#b0b0b0;transform:translateX(-100%);">56%</div>
<svg class="a" style="left:713.5px;top:801.3px" width="26" height="26" viewBox="0 0 26 26"><circle cx="13" cy="13" r="11.9" fill="#fff" stroke="#5579bb" stroke-width="2.1"/><path d="M12.5 1.5 L10 4.5 L11 6.5 L8.3 10.5 L8 13.5 L11.5 15.8 L13.5 17 L13.2 21.5 L15 23.8 L18.3 21.2 L19.8 17 L22.5 15 L24.5 15.5 L25 11 A12 12 0 0 0 12.5 1.5 Z" fill="#5579bb"/><path d="M1.2 15.5 Q4.5 16.5 5.5 19.5 Q6.5 22.5 9 24.5 Q2.5 22.5 1.2 15.5 Z" fill="#5579bb"/><circle cx="14.5" cy="7.5" r=".7" fill="#fff"/><circle cx="16.5" cy="8.3" r=".6" fill="#fff"/></svg>
<div class="a" style="left:763.00px;top:806.62px;font-size:16.1px;line-height:16.1px;color:#333;">Сайт</div>
<div class="a" style="left:761px;top:832.8px;width:307px;height:3px;background:#f1f1f1;border-radius:2px"></div>
<div class="a" style="left:761px;top:832.8px;width:33.700000000000045px;height:3px;background:#2f5fa8;border-radius:2px"></div>
<div class="a" style="left:1113.50px;top:824.50px;font-size:16px;line-height:16px;color:#222;transform:translateX(-100%);">165</div>
<div class="a" style="left:1147.50px;top:824.92px;font-size:15.5px;line-height:15.5px;color:#b0b0b0;transform:translateX(-100%);">11%</div>
<svg class="a" style="left:713.5px;top:845.1px" width="26" height="26" viewBox="0 0 26 26"><circle cx="13" cy="13" r="11.9" fill="#fff" stroke="#5579bb" stroke-width="2.1"/><path d="M12.5 1.5 L10 4.5 L11 6.5 L8.3 10.5 L8 13.5 L11.5 15.8 L13.5 17 L13.2 21.5 L15 23.8 L18.3 21.2 L19.8 17 L22.5 15 L24.5 15.5 L25 11 A12 12 0 0 0 12.5 1.5 Z" fill="#5579bb"/><path d="M1.2 15.5 Q4.5 16.5 5.5 19.5 Q6.5 22.5 9 24.5 Q2.5 22.5 1.2 15.5 Z" fill="#5579bb"/><circle cx="14.5" cy="7.5" r=".7" fill="#fff"/><circle cx="16.5" cy="8.3" r=".6" fill="#fff"/></svg>
<div class="a" style="left:761.00px;top:850.42px;font-size:16.1px;line-height:16.1px;color:#333;">Техническая поддержка чат</div>
<div class="a" style="left:761px;top:876.6px;width:307px;height:3px;background:#f1f1f1;border-radius:2px"></div>
<div class="a" style="left:761px;top:876.6px;width:23.799999999999955px;height:3px;background:#1aa33a;border-radius:2px"></div>
<div class="a" style="left:1113.50px;top:868.30px;font-size:16px;line-height:16px;color:#222;transform:translateX(-100%);">122</div>
<div class="a" style="left:1147.50px;top:868.73px;font-size:15.5px;line-height:15.5px;color:#b0b0b0;transform:translateX(-100%);">8%</div>
<svg class="a" style="left:710px;top:883.4px" width="35" height="40" viewBox="0 0 35 40"><path d="M7.75 6.9 L20.5 14 L21.4 12.2 Q22 11.3 22.8 11.1 L26.2 10.2 L23.3 14.5 L22.8 15.7 L23.5 16.6 L12.2 31.9 L17 21.4 Z" fill="#0a84ff" stroke="#0a84ff" stroke-width="0.7" stroke-linejoin="round"/></svg>
<div class="a" style="left:761.00px;top:895.22px;font-size:16.1px;line-height:16.1px;color:#333;">Техподдержка звонки</div>
<div class="a" style="left:761px;top:921.4px;width:307px;height:3px;background:#f1f1f1;border-radius:2px"></div>
<div class="a" style="left:761px;top:921.4px;width:23.799999999999955px;height:3px;background:#d7262a;border-radius:2px"></div>
<div class="a" style="left:1113.50px;top:913.10px;font-size:16px;line-height:16px;color:#222;transform:translateX(-100%);">118</div>
<div class="a" style="left:1147.50px;top:913.52px;font-size:15.5px;line-height:15.5px;color:#b0b0b0;transform:translateX(-100%);">8%</div>
<svg class="a" style="left:713.5px;top:933.4px" width="26" height="26" viewBox="0 0 26 26"><circle cx="13" cy="13" r="11.9" fill="#fff" stroke="#5579bb" stroke-width="2.1"/><path d="M12.5 1.5 L10 4.5 L11 6.5 L8.3 10.5 L8 13.5 L11.5 15.8 L13.5 17 L13.2 21.5 L15 23.8 L18.3 21.2 L19.8 17 L22.5 15 L24.5 15.5 L25 11 A12 12 0 0 0 12.5 1.5 Z" fill="#5579bb"/><path d="M1.2 15.5 Q4.5 16.5 5.5 19.5 Q6.5 22.5 9 24.5 Q2.5 22.5 1.2 15.5 Z" fill="#5579bb"/><circle cx="14.5" cy="7.5" r=".7" fill="#fff"/><circle cx="16.5" cy="8.3" r=".6" fill="#fff"/></svg>
<div class="a" style="left:761.00px;top:938.72px;font-size:16.1px;line-height:16.1px;color:#333;">Продажи</div>
<div class="a" style="left:1184.40px;top:84.12px;font-size:20.1px;line-height:20.1px;color:#111;font-weight:bold;">Отчеты</div>
<div class="a" style="left:1184.40px;top:122.45px;font-size:17.7px;line-height:17.7px;color:#111;font-weight:bold;">Чаты</div>
<div class="pill" style="top:150.5px">Нагрузка</div>
<div class="pill" style="top:190px">Линии</div>
<div class="pill" style="top:230.5px">Просроченные по клиентам</div>
<div class="pill" style="top:270px">Просроченные по сотрудникам</div>
<div class="pill" style="top:310.5px">Оценки консультаций</div>
<div class="a" style="left:1184.40px;top:363.01px;font-size:17.4px;line-height:17.4px;color:#111;font-weight:bold;">Телефония</div>
<div class="pill" style="top:390.2px">Статистика звонков</div>
<div class="pill" style="top:430.5px">Звонки по клиентам</div>
<div class="pill" style="top:470px">Загрузка сотрудников</div>
<div class="pill" style="top:510.2px">Нагрузка на линии</div>
<div class="a" style="left:1184.40px;top:562.16px;font-size:17.7px;line-height:17.7px;color:#111;font-weight:bold;">Обращения</div>
<div class="pill" style="top:589.7px">По клиентам</div>
<div class="pill" style="top:630px">Статистика</div>
<div class="card" style="left:1170px;top:687px;width:320px;height:280px;overflow:hidden">
</div>
<div class="mark" style="left:1170px;top:701.5px;height:22px"></div>
<div class="a" style="left:1184.40px;top:705.37px;font-size:19.1px;line-height:19.1px;color:#111;font-weight:bold;">Отзывы</div>
<svg class="a" style="left:1184px;top:747.0px" width="94" height="19" viewBox="0 0 94 19"><g transform="translate(-0.6 -0.4) scale(1.06)" fill="#278f3d"><path d="M9 0.8l2.5 5.6 6 .6-4.5 4 1.3 6-5.3-3.1-5.3 3.1 1.3-6-4.5-4 6-.6z"/></g><g transform="translate(18.299999999999997 -0.4) scale(1.06)" fill="#278f3d"><path d="M9 0.8l2.5 5.6 6 .6-4.5 4 1.3 6-5.3-3.1-5.3 3.1 1.3-6-4.5-4 6-.6z"/></g><g transform="translate(37.199999999999996 -0.4) scale(1.06)" fill="#278f3d"><path d="M9 0.8l2.5 5.6 6 .6-4.5 4 1.3 6-5.3-3.1-5.3 3.1 1.3-6-4.5-4 6-.6z"/></g><g transform="translate(56.099999999999994 -0.4) scale(1.06)" fill="#278f3d"><path d="M9 0.8l2.5 5.6 6 .6-4.5 4 1.3 6-5.3-3.1-5.3 3.1 1.3-6-4.5-4 6-.6z"/></g><g transform="translate(75.0 -0.4) scale(1.06)" fill="#278f3d"><path d="M9 0.8l2.5 5.6 6 .6-4.5 4 1.3 6-5.3-3.1-5.3 3.1 1.3-6-4.5-4 6-.6z"/></g></svg>
<div class="a" style="left:1290px;top:754.5px;width:161px;height:3px;background:#f0f0f0;border-radius:2px"></div>
<div class="a" style="left:1290px;top:754.5px;width:102.70000000000005px;height:3px;background:#14a035;border-radius:2px"></div>
<div class="a" style="left:1455px;top:748.0px;width:35px;overflow:hidden;height:20px"><div class="a" style="right:-6px;top:0;font-size:17px;line-height:18px;color:#cdcdcd">64%</div></div>
<svg class="a" style="left:1184px;top:782.5px" width="94" height="19" viewBox="0 0 94 19"><g transform="translate(-0.6 -0.4) scale(1.06)" fill="#8cc63f"><path d="M9 0.8l2.5 5.6 6 .6-4.5 4 1.3 6-5.3-3.1-5.3 3.1 1.3-6-4.5-4 6-.6z"/></g><g transform="translate(18.299999999999997 -0.4) scale(1.06)" fill="#8cc63f"><path d="M9 0.8l2.5 5.6 6 .6-4.5 4 1.3 6-5.3-3.1-5.3 3.1 1.3-6-4.5-4 6-.6z"/></g><g transform="translate(37.199999999999996 -0.4) scale(1.06)" fill="#8cc63f"><path d="M9 0.8l2.5 5.6 6 .6-4.5 4 1.3 6-5.3-3.1-5.3 3.1 1.3-6-4.5-4 6-.6z"/></g><g transform="translate(56.099999999999994 -0.4) scale(1.06)" fill="#8cc63f"><path d="M9 0.8l2.5 5.6 6 .6-4.5 4 1.3 6-5.3-3.1-5.3 3.1 1.3-6-4.5-4 6-.6z"/></g><g transform="translate(75.0 -0.4) scale(1.06)" fill="#d2d2d2"><path d="M9 0.8l2.5 5.6 6 .6-4.5 4 1.3 6-5.3-3.1-5.3 3.1 1.3-6-4.5-4 6-.6z"/></g></svg>
<div class="a" style="left:1290px;top:790.0px;width:161px;height:3px;background:#f0f0f0;border-radius:2px"></div>
<div class="a" style="left:1290px;top:790.0px;width:43.200000000000045px;height:3px;background:#8cc63f;border-radius:2px"></div>
<div class="a" style="left:1455px;top:783.5px;width:35px;overflow:hidden;height:20px"><div class="a" style="right:-6px;top:0;font-size:17px;line-height:18px;color:#cdcdcd">27%</div></div>
<svg class="a" style="left:1184px;top:818.0px" width="94" height="19" viewBox="0 0 94 19"><g transform="translate(-0.6 -0.4) scale(1.06)" fill="#f9c332"><path d="M9 0.8l2.5 5.6 6 .6-4.5 4 1.3 6-5.3-3.1-5.3 3.1 1.3-6-4.5-4 6-.6z"/></g><g transform="translate(18.299999999999997 -0.4) scale(1.06)" fill="#f9c332"><path d="M9 0.8l2.5 5.6 6 .6-4.5 4 1.3 6-5.3-3.1-5.3 3.1 1.3-6-4.5-4 6-.6z"/></g><g transform="translate(37.199999999999996 -0.4) scale(1.06)" fill="#f9c332"><path d="M9 0.8l2.5 5.6 6 .6-4.5 4 1.3 6-5.3-3.1-5.3 3.1 1.3-6-4.5-4 6-.6z"/></g><g transform="translate(56.099999999999994 -0.4) scale(1.06)" fill="#d2d2d2"><path d="M9 0.8l2.5 5.6 6 .6-4.5 4 1.3 6-5.3-3.1-5.3 3.1 1.3-6-4.5-4 6-.6z"/></g><g transform="translate(75.0 -0.4) scale(1.06)" fill="#d2d2d2"><path d="M9 0.8l2.5 5.6 6 .6-4.5 4 1.3 6-5.3-3.1-5.3 3.1 1.3-6-4.5-4 6-.6z"/></g></svg>
<div class="a" style="left:1290px;top:825.5px;width:161px;height:3px;background:#f0f0f0;border-radius:2px"></div>
<div class="a" style="left:1290px;top:825.5px;width:8px;height:3px;background:#f0b04a;border-radius:2px"></div>
<div class="a" style="left:1455px;top:819.0px;width:35px;overflow:hidden;height:20px"><div class="a" style="right:-6px;top:0;font-size:17px;line-height:18px;color:#cdcdcd">5%</div></div>
<svg class="a" style="left:1184px;top:853.4px" width="94" height="19" viewBox="0 0 94 19"><g transform="translate(-0.6 -0.4) scale(1.06)" fill="#ea6f1e"><path d="M9 0.8l2.5 5.6 6 .6-4.5 4 1.3 6-5.3-3.1-5.3 3.1 1.3-6-4.5-4 6-.6z"/></g><g transform="translate(18.299999999999997 -0.4) scale(1.06)" fill="#ea6f1e"><path d="M9 0.8l2.5 5.6 6 .6-4.5 4 1.3 6-5.3-3.1-5.3 3.1 1.3-6-4.5-4 6-.6z"/></g><g transform="translate(37.199999999999996 -0.4) scale(1.06)" fill="#d2d2d2"><path d="M9 0.8l2.5 5.6 6 .6-4.5 4 1.3 6-5.3-3.1-5.3 3.1 1.3-6-4.5-4 6-.6z"/></g><g transform="translate(56.099999999999994 -0.4) scale(1.06)" fill="#d2d2d2"><path d="M9 0.8l2.5 5.6 6 .6-4.5 4 1.3 6-5.3-3.1-5.3 3.1 1.3-6-4.5-4 6-.6z"/></g><g transform="translate(75.0 -0.4) scale(1.06)" fill="#d2d2d2"><path d="M9 0.8l2.5 5.6 6 .6-4.5 4 1.3 6-5.3-3.1-5.3 3.1 1.3-6-4.5-4 6-.6z"/></g></svg>
<div class="a" style="left:1290px;top:860.9px;width:161px;height:3px;background:#f0f0f0;border-radius:2px"></div>
<div class="a" style="left:1290px;top:860.9px;width:4px;height:3px;background:#e8681c;border-radius:2px"></div>
<div class="a" style="left:1455px;top:854.4px;width:35px;overflow:hidden;height:20px"><div class="a" style="right:-6px;top:0;font-size:17px;line-height:18px;color:#cdcdcd">3%</div></div>
<svg class="a" style="left:1184px;top:888.5px" width="94" height="19" viewBox="0 0 94 19"><g transform="translate(-0.6 -0.4) scale(1.06)" fill="#cc1f1a"><path d="M9 0.8l2.5 5.6 6 .6-4.5 4 1.3 6-5.3-3.1-5.3 3.1 1.3-6-4.5-4 6-.6z"/></g><g transform="translate(18.299999999999997 -0.4) scale(1.06)" fill="#d2d2d2"><path d="M9 0.8l2.5 5.6 6 .6-4.5 4 1.3 6-5.3-3.1-5.3 3.1 1.3-6-4.5-4 6-.6z"/></g><g transform="translate(37.199999999999996 -0.4) scale(1.06)" fill="#d2d2d2"><path d="M9 0.8l2.5 5.6 6 .6-4.5 4 1.3 6-5.3-3.1-5.3 3.1 1.3-6-4.5-4 6-.6z"/></g><g transform="translate(56.099999999999994 -0.4) scale(1.06)" fill="#d2d2d2"><path d="M9 0.8l2.5 5.6 6 .6-4.5 4 1.3 6-5.3-3.1-5.3 3.1 1.3-6-4.5-4 6-.6z"/></g><g transform="translate(75.0 -0.4) scale(1.06)" fill="#d2d2d2"><path d="M9 0.8l2.5 5.6 6 .6-4.5 4 1.3 6-5.3-3.1-5.3 3.1 1.3-6-4.5-4 6-.6z"/></g></svg>
<div class="a" style="left:1290px;top:896.0px;width:161px;height:3px;background:#f0f0f0;border-radius:2px"></div>
<div class="a" style="left:1290px;top:896.0px;width:2.5px;height:3px;background:#d0201a;border-radius:2px"></div>
<div class="a" style="left:1455px;top:889.5px;width:35px;overflow:hidden;height:20px"><div class="a" style="right:-6px;top:0;font-size:17px;line-height:18px;color:#cdcdcd">1%</div></div>
<div class="a" style="left:1190.00px;top:937.45px;font-size:23px;line-height:23px;color:#e8401e;">Я</div>
<div class="a" style="left:1455px;top:944px;width:35px;overflow:hidden;height:20px"><div class="a" style="right:-6px;top:0;font-size:17px;line-height:18px;color:#cdcdcd">2%</div></div>
<div class="a" style="left:1235.00px;top:945.25px;font-size:15px;line-height:15px;color:#222;">5</div>
<div class="a" style="left:1273.5px;top:948.5px;width:7px;height:6px;background:#c0150f;"></div>
<div class="a" style="left:1282.25px;top:948.5px;width:7px;height:6px;background:#c0150f;"></div>
<div class="a" style="left:1291.0px;top:948.5px;width:7px;height:6px;background:#e25a1c;"></div>
<div class="a" style="left:1299.75px;top:948.5px;width:7px;height:6px;background:#e8701e;"></div>
<div class="a" style="left:1308.5px;top:948.5px;width:7px;height:6px;background:#ec7e22;"></div>
<div class="a" style="left:1317.25px;top:948.5px;width:7px;height:6px;background:#ef8e26;"></div>
<div class="a" style="left:1326.0px;top:948.5px;width:7px;height:6px;background:#f07a20;"></div>
<div class="a" style="left:1334.75px;top:948.5px;width:7px;height:6px;background:#f59a2a;"></div>
<div class="a" style="left:1343.5px;top:948.5px;width:7px;height:6px;background:#f6c24a;"></div>
<div class="a" style="left:1352.25px;top:948.5px;width:7px;height:6px;background:#f6c24a;"></div>
<div class="a" style="left:1361.0px;top:948.5px;width:7px;height:6px;background:#f6c44c;"></div>
<div class="a" style="left:1369.75px;top:948.5px;width:7px;height:6px;background:#f7c84e;"></div>
<div class="a" style="left:1378.5px;top:948.5px;width:7px;height:6px;background:#8cc63f;"></div>
<div class="a" style="left:1387.25px;top:948.5px;width:7px;height:6px;background:#8cc63f;"></div>
<div class="a" style="left:1396.0px;top:948.5px;width:7px;height:6px;background:#8cc63f;"></div>
<div class="a" style="left:1404.75px;top:948.5px;width:7px;height:6px;background:#8cc63f;"></div>
<div class="a" style="left:1413.5px;top:948.5px;width:7px;height:6px;background:#8cc63f;"></div>
<div class="a" style="left:1422.25px;top:948.5px;width:7px;height:6px;background:#7dbf3a;"></div>
<div class="a" style="left:1431.0px;top:948.5px;width:7px;height:6px;background:#2e9c45;"></div>
<div class="a" style="left:1439.75px;top:948.5px;width:7px;height:6px;background:#2e9c45;"></div>
<svg class="a" style="left:1518px;top:58px" width="22" height="21" viewBox="0 0 22 21" fill="none" stroke="#5d6478" stroke-width="1.6"><rect x="1" y="1" width="8" height="7.5" rx="1.5"/><rect x="12" y="1" width="8" height="7.5" rx="1.5"/><rect x="1" y="11.5" width="8" height="7.5" rx="1.5"/><rect x="12" y="11.5" width="8" height="7.5" rx="1.5"/></svg>
<svg class="a" style="left:1517px;top:100px" width="23" height="23" viewBox="0 0 23 23" fill="none" stroke="#7a8194" stroke-width="1.4" stroke-linejoin="round"><path d="M10 4.5A8.5 8.5 0 1 0 17.5 13H10z"/><path d="M13 1.5a8 8 0 0 1 8 8h-8z"/></svg>
<div class="a" style="left:1511px;top:506px;width:35px;height:35px;border-radius:50%;background:#ebebeb;border:1px solid #e6e6ea"></div>
<svg class="a" style="left:1519px;top:516px" width="20" height="17" viewBox="0 0 20 17" fill="#333"><rect x="7.5" y="0.5" width="5" height="4"/><path d="M10 4.5v4M3 12V8.5h14V12M10 8.5V12" stroke="#333" stroke-width="1.3" fill="none"/><circle cx="3" cy="13.5" r="2"/><circle cx="10" cy="13.5" r="2"/><circle cx="17" cy="13.5" r="2"/></svg>
<div class="a" style="left:1511px;top:560px;width:35px;height:100px;border-radius:18px;background:#ebebeb"></div>
<svg class="a" style="left:1519px;top:570px" width="21" height="17" viewBox="0 0 21 17" fill="#cc1a1e"><path d="M13.5 16.5H20.5Q20.3 12.3 16.8 11.6L15.8 13.5Z"/><ellipse cx="15.5" cy="6.8" rx="2.6" ry="3.8"/><ellipse cx="8" cy="5" rx="3.4" ry="4.7"/><path d="M0.5 16.5Q0.8 11.5 5.6 10.6L8 13.2L10.4 10.6Q15.2 11.5 15.5 16.5Z" stroke="#efefef" stroke-width="0.8"/></svg>
<div class="a" style="left:1528.70px;top:600.40px;font-size:16px;line-height:16px;color:#d42a2a;transform:translateX(-50%);">0</div>
<div class="a" style="left:1514px;top:623px;width:29px;height:1px;background:#dedede;"></div>
<div class="a" style="left:1528.70px;top:632.40px;font-size:16px;line-height:16px;color:#d42a2a;transform:translateX(-50%);">1</div>
<div class="a" style="left:1511px;top:677px;width:35px;height:35px;border-radius:50%;background:#ebebeb"></div>
<svg class="a" style="left:1521px;top:687px" width="15" height="15" viewBox="0 0 15 15" fill="none" stroke="#333" stroke-width="1.4" stroke-linejoin="round"><path d="M1 1h13v8l-5 5H1z"/><path d="M9 14V9h5"/></svg>
<div class="a" style="left:1511px;top:731px;width:35px;height:35px;border-radius:50%;background:#ebebeb"></div>
<div class="a" style="left:1528.70px;top:735.55px;font-size:17px;line-height:17px;color:#222;transform:translateX(-50%);">12</div>
<div class="a" style="left:1528.70px;top:754.35px;font-size:9px;line-height:9px;color:#222;font-weight:bold;transform:translateX(-50%);">ВТ</div>
<div class="a" style="left:1511px;top:784px;width:35px;height:68px;border-radius:18px;background:#ebebeb"></div>
<svg class="a" style="left:1520px;top:791px" width="18" height="18" viewBox="0 0 18 18" fill="#c4c4c4"><path d="M14 1.5l2.5 2.5q1 1.5-.5 4-4 6-9.5 9-2 1-3.5 0L1 15l3-3 2.5 1.5q3.5-2 5.5-5.5L10.5 5.5z"/></svg>
<div class="a" style="left:1528.70px;top:823.55px;font-size:17px;line-height:17px;color:#d42a2a;transform:translateX(-50%);">3</div>
<div class="a" style="left:1511px;top:870px;width:35px;height:35px;border-radius:50%;background:#ebebeb"></div>
<svg class="a" style="left:1518px;top:878px" width="21" height="19" viewBox="0 0 21 19" fill="none" stroke="#333" stroke-width="1.4" stroke-linejoin="round"><path d="M6 14.5Q1 13 1 8.5 1 2 10.5 2T20 8.5q0 6.5-9.5 6.5-1.5 0-2.5-.3L4.5 17.5z"/></svg>
<div class="a" style="left:1511px;top:922px;width:35px;height:35px;border-radius:50%;background:#ece9fd;border:1px solid #d4cdf7"></div>
<div class="a" style="left:1528.70px;top:930.30px;font-size:22px;line-height:22px;color:#3f2fa8;font-weight:bold;transform:translateX(-50%);">?</div>
<div class="a" style="left:214px;top:930px;width:1284px;height:24px;background:linear-gradient(rgba(0,0,0,0),rgba(0,0,0,.015) 40%,rgba(0,0,0,.06))"></div>
</body></html>
